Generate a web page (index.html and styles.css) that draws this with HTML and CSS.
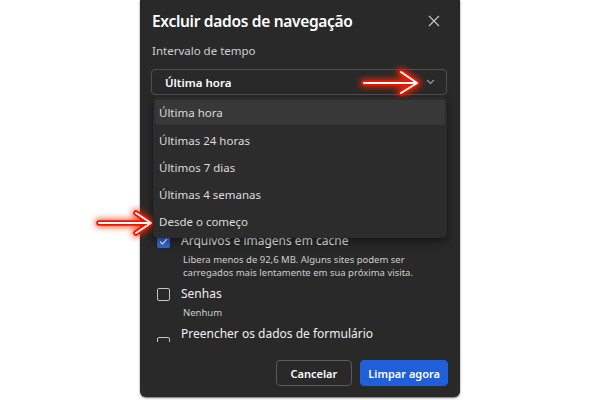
FILE: index.html
```html
<!DOCTYPE html>
<html lang="pt-BR">
<head>
  <meta charset="UTF-8" />
  <title>Excluir dados de navegação</title>
  <link rel="stylesheet" href="styles.css">
</head>
<body>
  <div class="dialog">
    <div class="dialog-head">
      <h1>Excluir dados de navegação</h1>
      <button class="close" aria-label="Fechar">
        <svg width="12" height="12" viewBox="0 0 12 12"><path d="M1 1L11 11M11 1L1 11" stroke="#c8c8c8" stroke-width="1.1" fill="none"/></svg>
      </button>
    </div>

    <div class="label">Intervalo de tempo</div>
    <div class="select-wrap">
      <div class="select">
        <span>Última hora</span>
        <svg width="9" height="6" viewBox="0 0 9 6"><path d="M1 1L4.5 4.5L8 1" stroke="#a0a0a0" stroke-width="1.1" fill="none"/></svg>
      </div>
      <div class="menu">
        <div class="menu-item active">Última hora</div>
        <div class="menu-item">Últimas 24 horas</div>
        <div class="menu-item">Últimos 7 dias</div>
        <div class="menu-item">Últimas 4 semanas</div>
        <div class="menu-item">Desde o começo</div>
      </div>
    </div>

    <div class="list">
      <div class="item">
        <span class="box checked">
          <svg width="11" height="11" viewBox="0 0 11 11"><path d="M2 5.5L4.5 8L9 3" stroke="#fff" stroke-width="1.2" fill="none"/></svg>
        </span>
        <div>
          <div class="item-title">Arquivos e imagens em cache</div>
          <div class="item-desc">Libera menos de 92,6 MB. Alguns sites podem ser<br>carregados mais lentamente em sua próxima visita.</div>
        </div>
      </div>
      <div class="item">
        <span class="box"></span>
        <div>
          <div class="item-title">Senhas</div>
          <div class="item-desc">Nenhum</div>
        </div>
      </div>
      <div class="item">
        <span class="box low"></span>
        <div>
          <div class="item-title">Preencher os dados de formulário</div>
        </div>
      </div>
    </div>

    <div class="actions">
      <button class="btn">Cancelar</button>
      <button class="btn primary">Limpar agora</button>
    </div>
  </div>

  <!-- annotation arrows -->
  <svg class="arrows" width="600" height="400" viewBox="0 0 600 400">
    <defs>
      <filter id="glow" x="-20%" y="-50%" width="140%" height="200%">
        <feGaussianBlur stdDeviation="3" />
      </filter>
    </defs>
    <g fill="none" stroke-linecap="round" stroke-linejoin="round">
      <g filter="url(#glow)" stroke="#ff2a00" stroke-width="8" opacity="0.8">
        <path d="M364 83H417M401 72L417 83L401 93" />
        <path d="M99 223H151M136 213L151 223L136 233" />
      </g>
      <g stroke="#f01400" stroke-width="5.5">
        <path d="M364 83H417M401 72L417 83L401 93" />
        <path d="M99 223H151M136 213L151 223L136 233" />
      </g>
      <g stroke="#ffffff" stroke-width="2">
        <path d="M364 83H417M401 72L417 83L401 93" />
        <path d="M99 223H151M136 213L151 223L136 233" />
      </g>
    </g>
  </svg>
</body>
</html>
```

FILE: styles.css
```css
body {
  margin: 0;
  background: #ffffff;
  font-family: 'Noto Sans', 'Open Sans', sans-serif;
  color: #ffffff;
  position: relative;
  width: 600px;
  height: 400px;
  overflow: hidden;
}

.dialog {
  margin-left: 140px;
  width: 320px;
  height: 397px;
  box-sizing: border-box;
  padding: 0 12px 11px 12px;
  background: #292929;
  border-radius: 0 0 6px 6px;
  box-shadow: 0 1px 2px rgba(0,0,0,0.6);
  display: flex;
  flex-direction: column;
}

.dialog-head {
  display: flex;
  justify-content: space-between;
  align-items: center;
  height: 24px;
  margin-top: 9px;
}

.dialog-head h1 {
  margin: 0;
  font-size: 15.5px;
  font-weight: 600;
  letter-spacing: -0.3px;
}

.close {
  background: none;
  border: none;
  padding: 0;
  margin-right: 8px;
  width: 12px;
  height: 12px;
  display: flex;
}

.label {
  margin-top: 10px;
  font-size: 11.5px;
  color: #d0d0d0;
  line-height: 16px;
}

.select-wrap {
  position: relative;
  margin-top: 10px;
}

.select {
  height: 26px;
  box-sizing: border-box;
  margin-left: -1px;
  margin-right: 1px;
  border: 1px solid #4e4e4e;
  border-radius: 4px;
  display: flex;
  justify-content: space-between;
  align-items: center;
  padding: 0 11px 0 13px;
  font-size: 11.5px;
  font-weight: 600;
}

.menu {
  position: absolute;
  top: 28px;
  left: 1px;
  right: 1px;
  padding: 3px 2px;
  background: #2c2c2c;
  border-radius: 4px;
  box-shadow: 0 4px 10px rgba(0,0,0,0.45), 0 0 1px rgba(0,0,0,0.6);
  z-index: 2;
}

.menu-item {
  height: 27px;
  line-height: 27px;
  padding-left: 4px;
  font-size: 11.5px;
  color: #dcdcdc;
  border-radius: 3px;
}

.menu-item.active {
  background: #383838;
  height: 25px;
  line-height: 25px;
  margin-bottom: 2px;
}

.list {
  flex: 1;
  overflow: hidden;
  padding-top: 138px;
  margin-bottom: 18px;
}

.item {
  display: flex;
  gap: 11px;
  padding-left: 5px;
  margin-bottom: 7px;
}

.box {
  flex: none;
  width: 13px;
  height: 13px;
  box-sizing: border-box;
  margin-top: 2px;
  border: 1px solid #c4c4c4;
  border-radius: 2px;
  display: flex;
}

.box.checked {
  background: #2e6ad9;
  border-color: #2e6ad9;
}

.box.low {
  margin-top: 11px;
}

.item-title {
  font-size: 12px;
  line-height: 16px;
  color: #f0f0f0;
}

.item-desc {
  margin-top: 4px;
  padding-left: 2px;
  font-size: 9.5px;
  line-height: 13px;
  color: #cfcfcf;
}

.actions {
  display: flex;
  justify-content: flex-end;
  gap: 8px;
}

.btn {
  height: 26px;
  box-sizing: border-box;
  padding: 0 14px;
  border: 1px solid #5a5a5a;
  border-radius: 4px;
  background: #292929;
  color: #ffffff;
  font-family: 'Noto Sans', 'Open Sans', sans-serif;
  font-size: 11px;
  font-weight: 600;
}

.btn.primary {
  background: #1f5fd8;
  border-color: #1f5fd8;
  padding: 0 7px;
}

.arrows {
  position: absolute;
  top: 0;
  left: 0;
  pointer-events: none;
}
```
